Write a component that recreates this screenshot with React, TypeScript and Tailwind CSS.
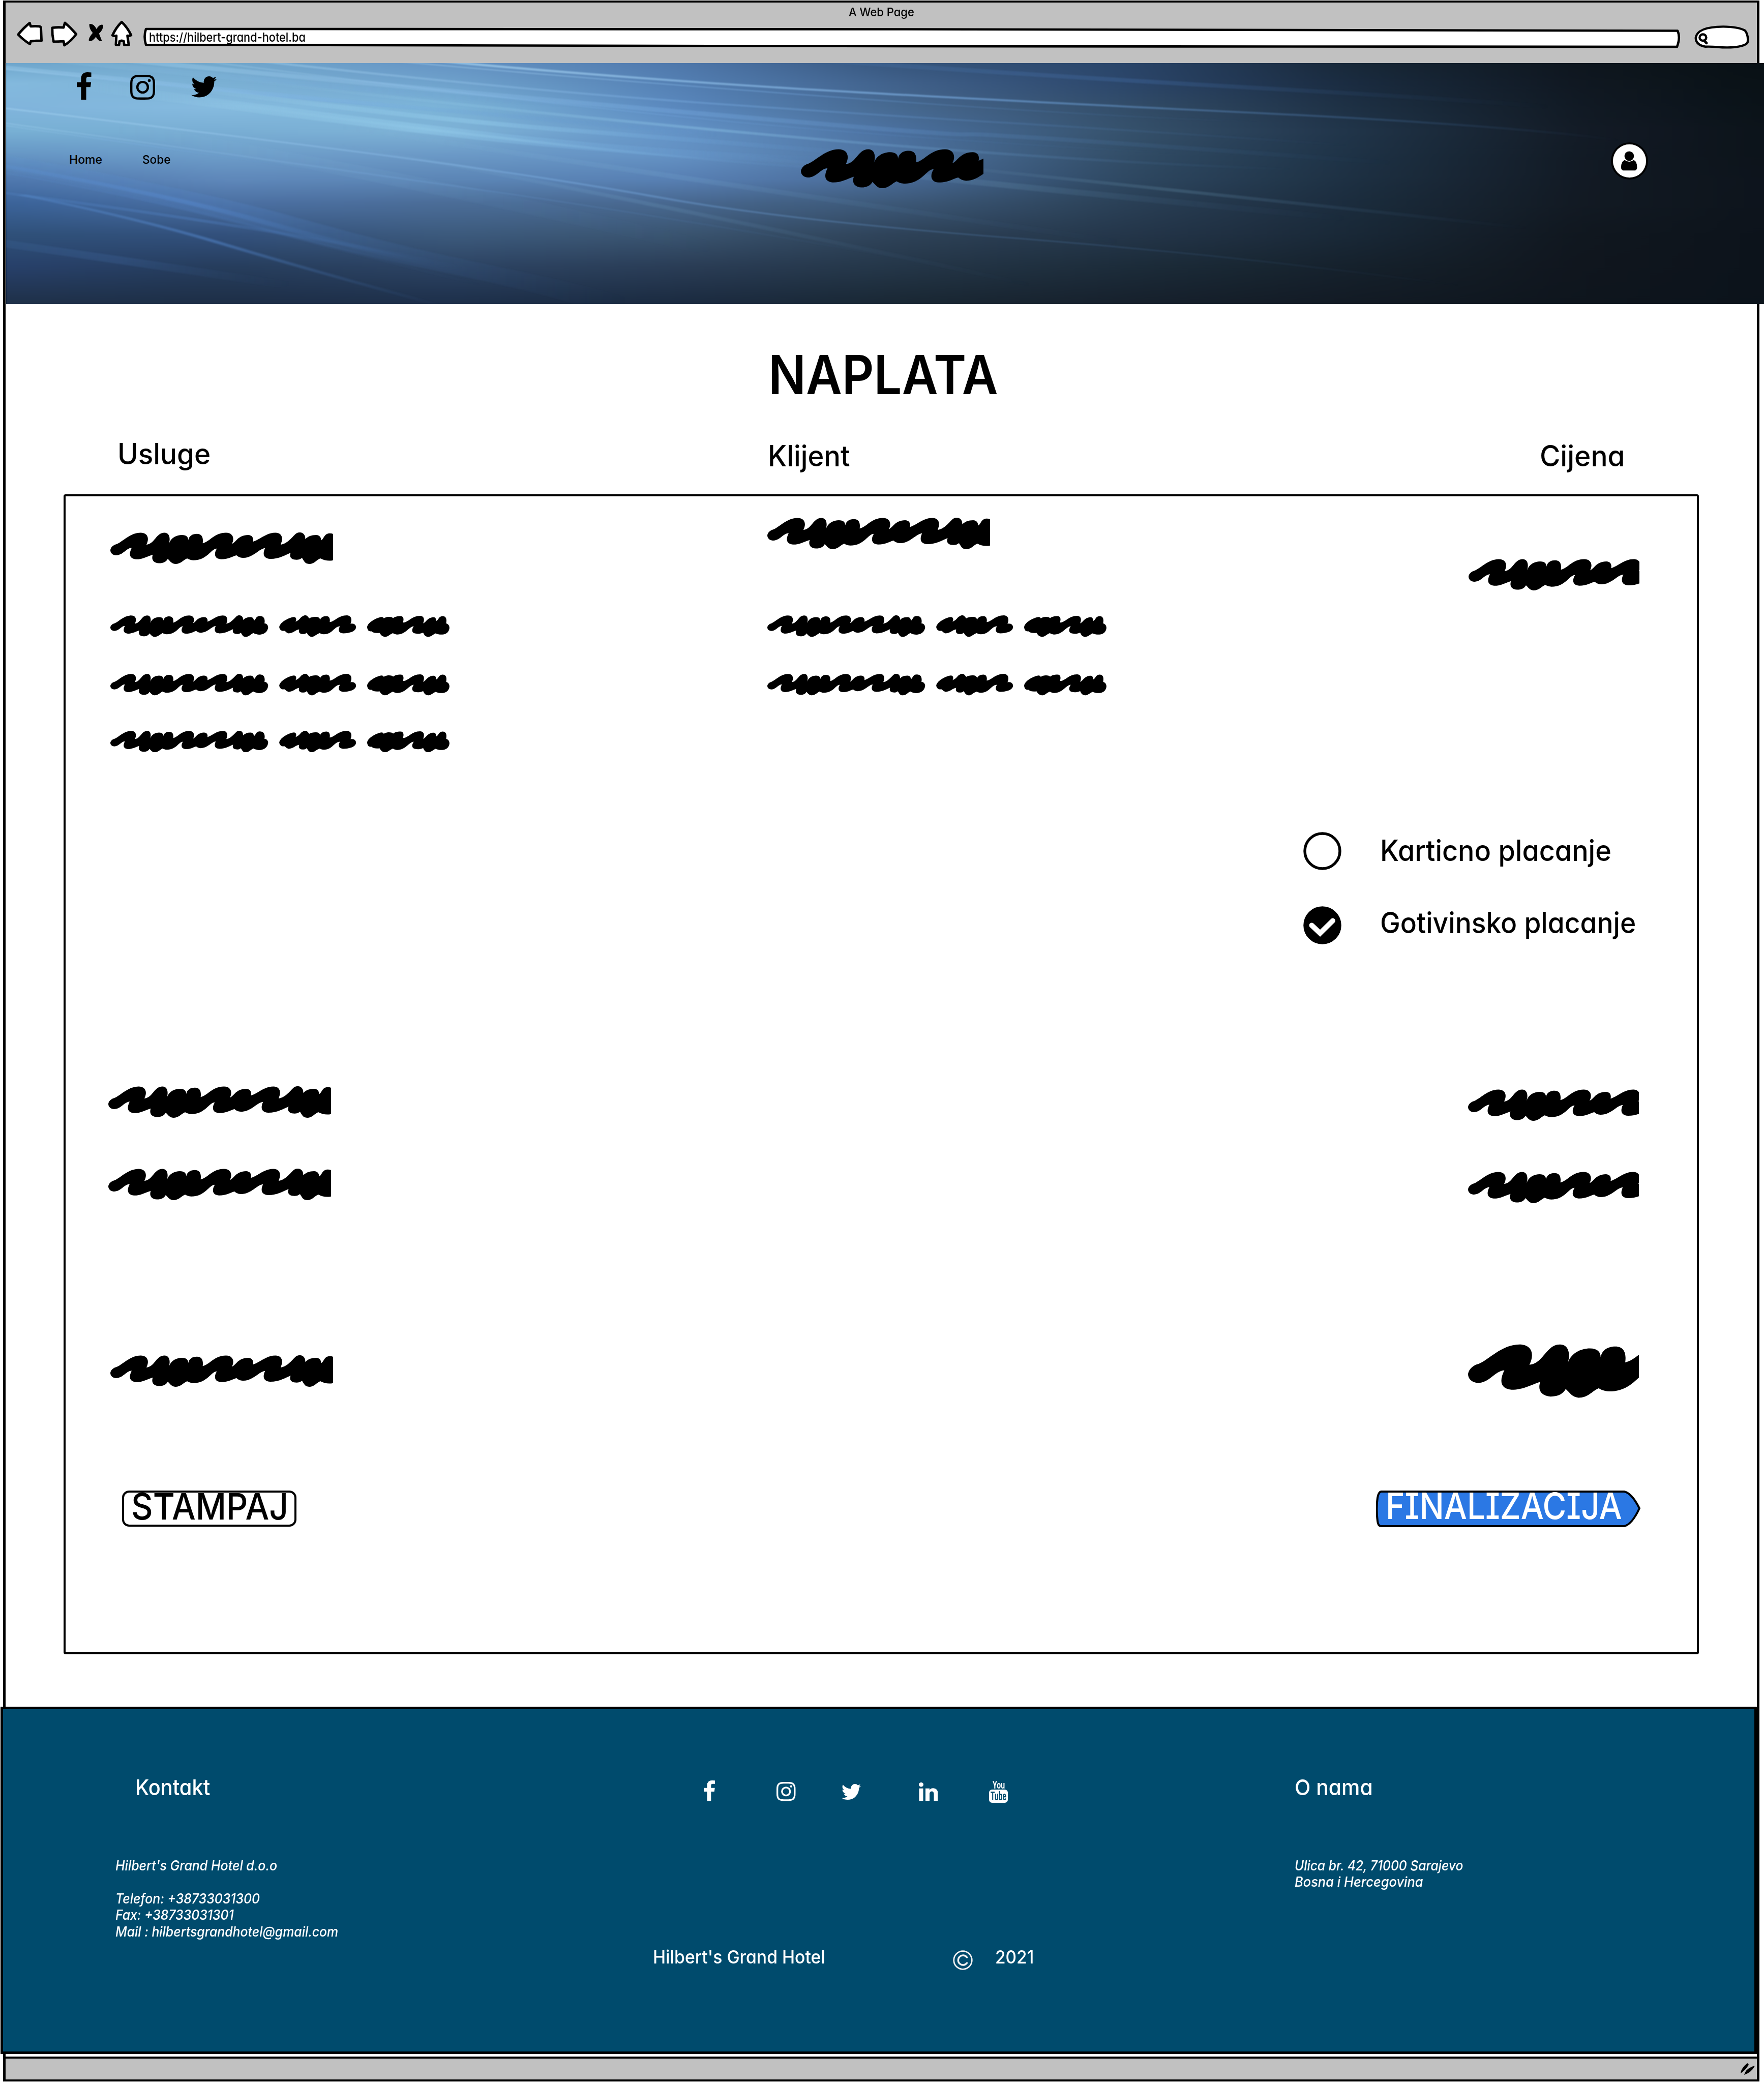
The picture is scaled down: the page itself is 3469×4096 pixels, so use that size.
import { useLayoutEffect, useRef, useState } from "react";
import type { ReactNode } from "react";

/* ---------- text ---------- */

/** One line of text, condensed or stretched horizontally to an exact width. */
function Line({ w, className = "", children }: { w: number; className?: string; children: ReactNode }) {
  const ref = useRef<HTMLSpanElement>(null);
  const [scale, setScale] = useState(1);
  useLayoutEffect(() => {
    if (ref.current) setScale(w / ref.current.offsetWidth);
  }, [w]);
  return (
    <div className={"flex shrink-0 items-center whitespace-nowrap " + className} style={{ width: w }}>
      <span className="origin-left" style={{ transform: `scaleX(${scale})` }}>
        <span ref={ref} className="inline-block">
          {children}
        </span>
      </span>
    </div>
  );
}

/* ---------- scribbles ---------- */

const SCRIBBLE =
  "M0 75C2 62 12 53 22 50C45 39 70 2 109 1C134 1 142 24 130 52C160 49 165 1 195 1C212 1 218 22 211 49C218 22 240 11 258 11C274 11 281 20 281 33C284 14 297 6 312 6C330 6 336 22 333 46C358 40 375 1 417 1C442 1 449 26 438 49C452 44 460 11 497 11C512 12 517 24 514 40C540 30 562 1 595 1C620 1 624 26 614 52C642 48 662 8 672 3C682 -4 704 -1 703 29C712 17 725 11 742 11C755 11 760 22 760 34C772 26 770 4 792 4C812 4 821 22 816 50C832 52 840 70 833 88C825 118 790 132 757 111C742 119 735 135 717 135C702 134 700 126 691 109C682 118 672 118 662 116C648 112 646 100 650 87C628 98 610 113 577 113C552 112 548 92 558 67C535 70 515 109 478 109C466 108 460 103 455 98C440 102 428 115 399 115C374 113 373 90 384 69C362 70 350 119 299 119C288 118 282 115 277 111C262 119 254 135 234 135C220 133 217 124 207 113C202 124 192 132 175 132C155 130 147 116 153 95C136 101 118 115 92 115C68 112 66 92 77 66C56 68 46 98 20 98C6 96 0 86 0 75Z";

const WORD_MID =
  "M792 922C796 898 832 880 845 879C854 880 855 890 851 899C864 894 868 881 875 877C886 868 892 870 900 885C912 877 928 878 934 881C940 886 939 890 938 895C941 881 950 875 962 875C974 876 976 888 974 901C992 899 1005 872 1036 872C1054 874 1055 892 1049 908C1062 904 1070 914 1069 925C1066 942 1045 949 1022 949C1006 947 1003 935 1011 919C990 919 985 953 953 953C946 953 942 950 938 948C925 953 920 964 908 964C898 962 895 953 891 946C887 953 876 953 870 951C862 947 862 940 864 932C850 935 842 949 826 949C816 947 816 940 810 938C802 940 794 936 792 922Z";

const WORD_END =
  "M1109 922C1112 899 1148 881 1160 879C1166 879 1168 882 1169 885C1178 877 1196 876 1203 884C1210 875 1229 874 1234 876C1242 881 1241 892 1238 903C1258 902 1270 874 1300 874C1316 875 1316 892 1311 906C1322 903 1325 880 1350 880C1357 881 1358 890 1357 896C1367 894 1366 875 1381 875C1396 876 1396 890 1394 906C1408 911 1408 930 1402 940C1395 956 1372 958 1356 949C1345 954 1340 964 1328 964C1317 962 1315 955 1311 946C1302 951 1290 952 1284 950C1270 947 1268 935 1277 919C1260 920 1248 955 1216 954C1210 953 1206 951 1202 948C1190 953 1185 964 1173 964C1160 961 1158 954 1154 947C1140 949 1131 947 1124 940C1115 942 1110 935 1109 922Z";

function Scribble({ w, h = 62 }: { w: number; h?: number }) {
  const visible = w / (0.008797 * h);
  return (
    <svg className="block shrink-0" width={w} height={h} viewBox={`0 0 ${visible} 135`} preserveAspectRatio="none">
      <path d={SCRIBBLE} />
    </svg>
  );
}

function ScribbleRow() {
  return (
    <svg className="block shrink-0" width={667.5} height={42.3} viewBox="183 872 1224 92" preserveAspectRatio="none">
      <path d={SCRIBBLE} transform="translate(183 872) scale(.681)" />
      <path d={WORD_MID} />
      <path d={WORD_END} />
    </svg>
  );
}

/* ---------- icons ---------- */

const GLYPHS = {
  facebook: {
    box: "479 0 864 1664",
    d: "M1343 12v264h-157q-86 0-116 36t-30 108v189h293l-39 296h-254v759h-306v-759h-255v-296h255v-218q0-186 104-288.5t277-102.5q147 0 228 12z",
  },
  instagram: {
    box: "128 128 1536 1536",
    d: "M1152 896q0-106-75-181t-181-75-181 75-75 181 75 181 181 75 181-75 75-181zm138 0q0 164-115 279t-279 115-279-115-115-279 115-279 279-115 279 115 115 279zm108-410q0 38-27 65t-65 27-65-27-27-65 27-65 65-27 65 27 27 65zm-502-220q-7 0-76.5-.5t-105.5 0-96.5 3-103 10-71.5 18.5q-50 20-88 58t-58 88q-11 29-18.5 71.5t-10 103-3 96.5 0 105.5.5 76.5-.5 76.5 0 105.5 3 96.5 10 103 18.5 71.5q20 50 58 88t88 58q29 11 71.5 18.5t103 10 96.5 3 105.5 0 76.5-.5 76.5.5 105.5 0 96.5-3 103-10 71.5-18.5q50-20 88-58t58-88q11-29 18.5-71.5t10-103 3-96.5 0-105.5-.5-76.5.5-76.5 0-105.5-3-96.5-10-103-18.5-71.5q-20-50-58-88t-88-58q-29-11-71.5-18.5t-103-10-96.5-3-105.5 0-76.5.5zm768 630q0 229-5 317-10 208-124 322t-322 124q-88 5-317 5t-317-5q-208-10-322-124t-124-322q-5-88-5-317t5-317q10-208 124-322t322-124q88-5 317-5t317 5q208 10 322 124t124 322q5 88 5 317z",
  },
  twitter: {
    box: "108 256 1576 1280",
    d: "M1684 408q-67 98-162 167 1 14 1 42 0 130-38 259.5t-115.5 248.5-184.5 210.5-258 146-323 54.5q-271 0-496-145 35 4 78 4 225 0 401-138-105-2-188-64.5t-114-159.5q33 5 61 5 43 0 85-11-112-23-185.5-111.5t-73.5-205.5v-4q68 38 146 41-66-44-105-115t-39-154q0-88 44-163 121 149 294.5 238.5t371.5 99.5q-8-38-8-74 0-134 94.5-228.5t228.5-94.5q140 0 236 102 109-21 205-78-37 115-142 178 93-10 186-50z",
  },
  linkedin: {
    box: "128 148 1536 1468",
    d: "M477 625v991h-330v-991h330zm21-306q1 73-50.5 122t-135.5 49h-2q-82 0-132-49t-50-122q0-74 51.5-122.5t134.5-48.5 133 48.5 51 122.5zm1166 729v568h-329v-530q0-105-40.5-164.5t-126.5-59.5q-63 0-105.5 34.5t-63.5 85.5q-11 30-11 81v553h-329q2-399 2-647t-1-296l-1-48h329v144h-2q20-32 41-56t56.5-52 87-43.5 114.5-15.5q171 0 275 113.5t104 332.5z",
  },
};

function Glyph({ name, className }: { name: keyof typeof GLYPHS; className: string }) {
  return (
    <svg className={"block shrink-0 " + className} viewBox={GLYPHS[name].box} preserveAspectRatio="none" fill="currentColor">
      <path d={GLYPHS[name].d} />
    </svg>
  );
}

function YouTubeMark() {
  return (
    <div className="flex w-[37px] shrink-0 flex-col items-center font-['Roboto',sans-serif] font-bold">
      <Line w={24} className="h-[18px] text-[21px] leading-none">You</Line>
      <div className="flex h-[26px] w-[37px] items-center justify-center rounded-[6px] bg-white text-[#004b6d]">
        <Line w={31} className="h-[24px] text-[23px] leading-none">Tube</Line>
      </div>
    </div>
  );
}

/* ---------- header artwork ---------- */

// Colour grid of the backdrop: one vertical profile for each x position.
const ROWS = [0, 0.084, 0.183, 0.282, 0.382, 0.481, 0.58, 0.712, 0.845, 1];
const PROFILES: [number, string[]][] = [
  [6, ["#6fa6cc", "#84bade", "#80b4dc", "#78b0d4", "#6595c4", "#4f78ae", "#3b639a", "#2f5079", "#27406a", "#1e3048"]],
  [200, ["#72a8cc", "#7ab0d4", "#86bbdf", "#79aed4", "#6d9dc9", "#5f88ba", "#4b70a3", "#32507c", "#263d5c", "#1d2e46"]],
  [400, ["#6594c4", "#6fa2cc", "#7cb4d8", "#7eb2d6", "#6b99c6", "#5c86b6", "#4b6d98", "#3c5a7d", "#2c4363", "#1d2f4a"]],
  [600, ["#4f78ac", "#5480b4", "#5a88be", "#6494c8", "#6492c4", "#5880b4", "#486890", "#3a5470", "#2a3d56", "#1a2a40"]],
  [800, ["#36557c", "#40608a", "#46688f", "#4a6f9e", "#4d729f", "#486a96", "#3c5878", "#2e4258", "#243648", "#192733"]],
  [1000, ["#2a456a", "#2b466a", "#334d69", "#36516c", "#324d67", "#2e4862", "#2a4056", "#24364a", "#1c2c3a", "#16202c"]],
  [1200, ["#182838", "#1a2b40", "#1d3044", "#203449", "#1e3246", "#1d3042", "#1b2c3d", "#192837", "#15212c", "#121a24"]],
  [1400, ["#0e161e", "#101821", "#111a24", "#131b26", "#121b25", "#121a24", "#121a23", "#10171f", "#10161e", "#0e151d"]],
  [1568, ["#081014", "#091116", "#0a1218", "#0c131a", "#0c131a", "#0d141c", "#0d141c", "#0c131b", "#0c131b", "#0b131b"]],
];

const channel = (hex: string, i: number) => parseInt(hex.slice(1 + 2 * i, 3 + 2 * i), 16);

function colourAt(x: number, row: number) {
  let k = 0;
  while (k < PROFILES.length - 2 && PROFILES[k + 1][0] < x) k++;
  const [x0, a] = PROFILES[k];
  const [x1, b] = PROFILES[k + 1];
  const f = Math.min(1, Math.max(0, (x - x0) / (x1 - x0)));
  const mix = (i: number) => Math.round(channel(a[row], i) * (1 - f) + channel(b[row], i) * f);
  return `rgb(${mix(0)},${mix(1)},${mix(2)})`;
}

// Columns overrun both edges so that the blur has something to draw on.
const COLUMN_W = 20;
const COLUMNS = Array.from({ length: 86 }, (_, i) => -74 + i * COLUMN_W);

type Ray = [d: string, width: number, opacity: number, tone: "edge" | "inner" | "deep"];

const RAYS: Ray[] = [
  ["M-20 35Q110 125 200 190T420 335T640 480", 22, 0.32, "edge"],
  ["M-20 42Q110 135 200 200T420 345", 5, 0.3, "edge"],
  ["M60 150Q280 360 430 480T760 640", 44, 0.42, "inner"],
  ["M120 130Q340 350 500 440T800 610", 24, 0.4, "inner"],
  ["M180 260Q330 400 480 520T800 720", 12, 0.3, "inner"],
  ["M390 10Q550 115 700 180T1100 330T1440 510", 12, 0.62, "edge"],
  ["M350 10Q500 110 750 240T1120 390", 7, 0.4, "edge"],
  ["M230 10Q450 185 620 270T900 400T1200 540", 11, 0.36, "edge"],
  ["M120 10Q420 215 640 350T860 470T1240 650", 24, 0.32, "edge"],
  ["M180 10Q470 270 650 390T1050 590", 7, 0.28, "edge"],
  ["M200 120Q540 390 760 520T1150 690", 14, 0.34, "inner"],
  ["M60 10Q200 110 330 190T560 300", 30, 0.12, "edge"],
  ["M-20 285Q200 470 340 600T590 870T900 1120T1300 1420", 8, 0.42, "edge"],
  ["M-20 375Q200 590 400 790T820 1270", 6, 0.28, "edge"],
  ["M-20 390Q180 590 330 740", 4, 0.3, "edge"],
  ["M-20 615Q150 830 240 1010T420 1320T560 1570", 60, 0.18, "deep"],
  ["M-20 640Q140 830 230 1010T410 1330", 14, 0.32, "deep"],
  ["M-20 680Q120 850 210 1020T430 1420", 8, 0.18, "deep"],
  ["M-20 815Q130 950 250 1090T420 1330", 12, 0.26, "deep"],
  ["M20 850Q120 990 200 1160T400 1560", 8, 0.45, "deep"],
  ["M-20 1130Q100 1250 260 1420", 34, 0.14, "deep"],
  ["M720 0Q930 105 1120 180T1380 300", 24, 0.18, "deep"],
  ["M800 640Q1060 830 1360 1060", 16, 0.16, "inner"],
  ["M640 600Q900 800 1200 1000", 30, 0.12, "inner"],
  ["M300 420Q650 790 1000 1150", 22, 0.11, "inner"],
  ["M300 530Q560 860 920 1420", 14, 0.12, "inner"],
  ["M100 420Q400 790 640 1200", 50, 0.07, "inner"],
];

function Backdrop() {
  return (
    <svg className="absolute inset-0 h-full w-full overflow-hidden" viewBox="6 23 1562 1512" preserveAspectRatio="none">
      <defs>
        {COLUMNS.map((x, c) => (
          <linearGradient key={c} id={`col${c}`} x1="0" y1="0" x2="0" y2="1">
            {ROWS.map((offset, r) => (
              <stop key={r} offset={offset} stopColor={colourAt(x + COLUMN_W / 2, r)} />
            ))}
          </linearGradient>
        ))}
        <linearGradient id="edge">
          <stop offset="0" stopColor="#b0dcf6" />
          <stop offset="0.45" stopColor="#7db2ea" stopOpacity="0.9" />
          <stop offset="1" stopColor="#4a7fc0" stopOpacity="0" />
        </linearGradient>
        <linearGradient id="inner">
          <stop offset="0" stopColor="#a8dcf2" stopOpacity="0" />
          <stop offset="0.45" stopColor="#98d2f0" />
          <stop offset="1" stopColor="#5a92d8" stopOpacity="0" />
        </linearGradient>
        <linearGradient id="deep">
          <stop offset="0" stopColor="#5f96da" stopOpacity="0.6" />
          <stop offset="0.45" stopColor="#5c94e0" />
          <stop offset="1" stopColor="#3f6ba8" stopOpacity="0" />
        </linearGradient>
        <filter id="blend" filterUnits="userSpaceOnUse" x="-60" y="23" width="1700" height="1512" colorInterpolationFilters="sRGB">
          <feGaussianBlur stdDeviation="18 0" />
        </filter>
        <filter id="soft" filterUnits="userSpaceOnUse" x="-20" y="0" width="1620" height="1560" colorInterpolationFilters="sRGB">
          <feGaussianBlur stdDeviation="2 4" />
        </filter>
      </defs>
      <g filter="url(#blend)">
        {COLUMNS.map((x, c) => (
          <rect key={c} x={x} y={23} width={COLUMN_W} height={1512} fill={`url(#col${c})`} shapeRendering="crispEdges" />
        ))}
      </g>
      <g filter="url(#soft)" fill="none">
        {RAYS.map(([d, width, opacity, tone], i) => (
          <path key={i} d={d} strokeWidth={width} opacity={opacity} stroke={`url(#${tone})`} />
        ))}
      </g>
    </svg>
  );
}

/* ---------- browser chrome ---------- */

function BrowserBar() {
  return (
    <div className="flex h-[119px] shrink-0 flex-col bg-[#c1c1c1]">
      <div className="flex h-[34px] items-end pl-[1658px]">
        <Line w={129} className="h-[30px] text-[23px]">A Web Page</Line>
      </div>
      <div className="flex h-[60px] items-start">
        <svg className="ml-[20px] block h-[54.7px] w-[232.5px] shrink-0" viewBox="60 100 450 140" preserveAspectRatio="none">
          <g fill="#fff" stroke="#000" strokeWidth="4.8" strokeLinejoin="round">
            <path vectorEffect="non-scaling-stroke" d="M69 174Q90 140 113 116L117 133Q135 131 150 133Q156 134 156 145L158 205Q138 205 117 208L114 222Q92 205 69 174Z" />
            <path vectorEffect="non-scaling-stroke" d="M199 140Q220 136 242 139L247 115Q268 138 290 172Q270 208 245 228L242 208Q222 210 204 210Q198 175 199 140Z" />
            <path vectorEffect="non-scaling-stroke" d="M463 111Q485 138 499 177Q492 182 485 180L490 226L473 227L471 208Q463 202 455 208L453 227L441 226L443 180Q435 183 428 178Q442 138 463 111Z" />
          </g>
          <path d="M340 121Q356 116 367 146Q380 118 393 126Q393 150 377 169L388 206Q376 212 365 186Q350 214 338 204Q337 190 353 166Q338 142 340 121Z" />
        </svg>
        <div className="relative ml-[18px] mt-[15px] h-[41px] w-[3023px] shrink-0">
          <svg className="absolute inset-0 h-full w-full" viewBox="0 0 3023 41" preserveAspectRatio="none">
            <path d="M5 3L1500 3.500L3017 6.500Q3023 19 3016 38L1500 37L5 34Q0 18 5 3Z" fill="#fff" stroke="#000" strokeWidth="4.600" strokeLinejoin="round" />
          </svg>
          <Line w={308} className="relative ml-[11px] h-[39px] text-[24.500px]">https://hilbert-grand-hotel.ba</Line>
        </div>
        <svg className="ml-[27px] mt-[11px] block h-[46px] w-[108px] shrink-0" viewBox="1316 129 198 118" preserveAspectRatio="none">
          <path vectorEffect="non-scaling-stroke" fill="#fff" stroke="#000" strokeWidth="4.400" d="M1356 236Q1322 228 1321 192Q1326 136 1420 135Q1475 136 1499 155Q1512 180 1508 215Q1502 232 1460 239Q1430 242 1400 238Q1375 235 1356 236Z" />
          <ellipse vectorEffect="non-scaling-stroke" cx="1347" cy="190" rx="12" ry="16" fill="none" stroke="#000" strokeWidth="4.400" />
          <path vectorEffect="non-scaling-stroke" d="M1352 206L1360 218" stroke="#000" strokeWidth="5" strokeLinecap="round" />
        </svg>
      </div>
    </div>
  );
}

function Hero() {
  return (
    <header className="relative z-10 ml-px h-[474px] w-[3457px] shrink-0">
      <Backdrop />
      <div className="relative flex flex-col">
        <div className="flex h-[90px] items-start pl-[139px] pt-[18px]">
          <Glyph name="facebook" className="h-[54px] w-[28.500px]" />
          <Glyph name="instagram" className="ml-[76px] mt-[5px] h-[49px] w-[49px]" />
          <Glyph name="twitter" className="ml-[71px] mt-[8px] h-[41.500px] w-[50.500px]" />
        </div>
        <div className="flex h-[200px] items-start">
          <div className="flex pl-[124px] pt-[80px]">
            <Line w={65} className="h-[40px] text-[23px]">Home</Line>
            <Line w={55} className="ml-[79px] h-[40px] text-[23px]">Sobe</Line>
          </div>
          <div className="ml-[1240px] mt-[79px]">
            <Scribble w={358.7} h={77.3} />
          </div>
          <svg className="ml-[1234px] mt-[66px] block h-[73px] w-[73px] shrink-0" viewBox="1019 719 132 185" preserveAspectRatio="none">
            <ellipse cx="1085" cy="811.500" rx="66" ry="92.500" />
            <ellipse cx="1085" cy="811.500" rx="59" ry="83" fill="#fff" />
            <ellipse cx="1084" cy="787" rx="17" ry="23.500" />
            <path d="M1068 807Q1084 823 1100 807Q1112 812 1112 845Q1110 859 1104 859H1063Q1056 857 1055 845Q1055 812 1068 807Z" />
          </svg>
        </div>
      </div>
    </header>
  );
}

/* ---------- page body ---------- */

function Radio({ checked = false }: { checked?: boolean }) {
  return (
    <svg className="mb-[3px] block h-[75px] w-[75px] shrink-0" viewBox="0 0 75 75">
      <circle cx="37.500" cy="37.500" r="34.500" fill={checked ? "#000" : "#fff"} stroke="#000" strokeWidth="5.500" />
      {checked && <path d="M16.500 37.500L33 53L58 28.500" fill="none" stroke="#fff" strokeWidth="10" strokeLinecap="round" strokeLinejoin="miter" />}
    </svg>
  );
}

function Invoice() {
  return (
    <section className="ml-[113.500px] flex h-[2281px] w-[3216px] shrink-0 flex-col rounded-[4px] border-[4.500px] border-black">
      <div className="flex h-[661px] shrink-0 items-start">
        <div className="flex w-[1380px] shrink-0 flex-col pl-[88px] pt-[71px]">
          <Scribble w={438.5} />
          <div className="flex flex-col pt-[101px]">
            <ScribbleRow />
            <div className="pt-[73px]"><ScribbleRow /></div>
            <div className="pt-[69px]"><ScribbleRow /></div>
          </div>
        </div>
        <div className="flex w-[1379px] shrink-0 flex-col pt-[42px]">
          <Scribble w={438.5} />
          <div className="flex flex-col gap-[73px] pt-[130px]">
            <ScribbleRow />
            <ScribbleRow />
          </div>
        </div>
        <div className="pt-[123px]">
          <Scribble w={336} />
        </div>
      </div>

      <div className="flex shrink-0 flex-col gap-[71px] pl-[2434px]">
        <div className="flex h-[75px] items-center">
          <Radio />
          <Line w={455} className="mb-[4px] ml-[76px] h-[70px] text-[57px]">Karticno placanje</Line>
        </div>
        <div className="flex h-[75px] items-center">
          <Radio checked />
          <Line w={503} className="mb-[12px] ml-[76px] h-[63px] text-[57px]">Gotivinsko placanje</Line>
        </div>
      </div>

      <div className="mt-[278px] flex h-[162px] shrink-0 items-start justify-between pl-[84px] pr-[114px]">
        <Scribble w={438.5} />
        <div className="mt-[6px]"><Scribble w={335.5} /></div>
      </div>
      <div className="flex h-[345px] shrink-0 items-start justify-between pl-[84px] pr-[114px]">
        <Scribble w={438.5} />
        <div className="mt-[6px]"><Scribble w={335.5} /></div>
      </div>
      <div className="flex h-[106px] shrink-0 items-center justify-between pl-[88px] pr-[114px]">
        <Scribble w={438.5} />
        <Scribble w={335.5} h={105.5} />
      </div>

      <div className="mt-[182px] flex shrink-0 justify-between pl-[111px] pr-[111px]">
        <button className="flex h-[71px] w-[343px] items-start rounded-[14px] border-[4px] border-black bg-white pl-[14px]">
          <Line w={309} className="h-[54px] text-[72px]">STAMPAJ</Line>
        </button>
        <button className="relative flex h-[72px] w-[520px] items-start">
          <svg className="absolute inset-0 h-full w-full" viewBox="0 0 520 72">
            <path d="M10 2H488Q503 5 518 35Q503 67 488 70H10Q4 70 3 60Q0 36 3 14Q5 3 10 2Z" fill="#2b78e4" stroke="#000" strokeWidth="4" strokeLinejoin="round" />
          </svg>
          <Line w={465} className="relative ml-[19px] h-[60px] text-[72px] text-white">FINALIZACIJA</Line>
        </button>
      </div>
    </section>
  );
}

function Footer() {
  return (
    <footer className="relative z-10 -ml-[10px] flex h-[683px] w-[3454px] shrink-0 items-start border-[5px] border-black bg-[#004b6d] pt-[128px] text-white">
      <div className="flex w-[1280px] shrink-0 flex-col pl-[221px]">
        <Line w={147} className="ml-[39px] h-[50px] text-[43px]">Kontakt</Line>
        <div className="flex flex-col pt-[114px] text-[27px] leading-[32.400px] italic">
          <Line w={318} className="h-[32.400px]">Hilbert's Grand Hotel d.o.o</Line>
          <Line w={284} className="mt-[32.400px] h-[32.400px]">Telefon: +38733031300</Line>
          <Line w={233} className="h-[32.400px]">Fax: +38733031301</Line>
          <Line w={438} className="h-[32.400px]">Mail : hilbertsgrandhotel@gmail.com</Line>
        </div>
      </div>
      <div className="flex w-[1260px] shrink-0 flex-col pt-[12px]">
        <div className="flex h-[44px] items-center pl-[98px]">
          <Glyph name="facebook" className="mb-[3px] h-[40.500px] w-[22px]" />
          <Glyph name="instagram" className="ml-[121px] h-[37.500px] w-[37.500px]" />
          <Glyph name="twitter" className="ml-[90px] h-[31px] w-[38px]" />
          <Glyph name="linkedin" className="ml-[114px] h-[36px] w-[37.500px]" />
          <div className="ml-[101px]"><YouTubeMark /></div>
        </div>
        <div className="flex items-center pt-[278px]">
          <Line w={339} className="-ml-[2px] h-[50px] text-[35.500px]">Hilbert's Grand Hotel</Line>
          <svg className="ml-[251px] mt-[12px] block h-[39px] w-[39px]" viewBox="0 0 39 39" fill="none" stroke="#f2f2f2" strokeWidth="2.800">
            <circle cx="19.500" cy="19.500" r="17.800" />
            <path d="M27.500 14A9.500 9.500 0 1 0 27.500 25" strokeWidth="3.400" strokeLinecap="round" />
          </svg>
          <Line w={76} className="ml-[44px] h-[50px] text-[35.500px]">2021</Line>
        </div>
      </div>
      <div className="flex flex-col">
        <Line w={154} className="h-[50px] text-[43px]">O nama</Line>
        <div className="flex flex-col pt-[114px] text-[27px] leading-[32.400px] italic">
          <Line w={331} className="h-[32.400px]">Ulica br. 42, 71000 Sarajevo</Line>
          <Line w={253} className="h-[32.400px]">Bosna i Hercegovina</Line>
        </div>
      </div>
    </footer>
  );
}

export default function App() {
  return (
    <div className="h-[4096px] w-[3469px] overflow-hidden bg-white pl-[6px] pt-px font-['Inter',sans-serif] font-medium text-black [font-feature-settings:'cv11','cv08']">
      <div className="flex h-[4092px] w-[3454px] flex-col border-x-[5px] border-y-4 border-black">
        <BrowserBar />
        <Hero />
        <main className="flex h-[2758px] shrink-0 flex-col">
          <Line w={452} className="ml-[1500px] mt-[78px] h-[120px] text-[106px] font-semibold">NAPLATA</Line>
          <div className="flex h-[176px] shrink-0 items-start">
            <Line w={183} className="ml-[220px] mt-[62px] h-[70px] text-[57px]">Usluge</Line>
            <Line w={161} className="ml-[1096px] mt-[66px] h-[70px] text-[57px]">Klijent</Line>
            <Line w={168} className="ml-[1357px] mt-[66px] h-[70px] text-[57px]">Cijena</Line>
          </div>
          <Invoice />
        </main>
        <Footer />
        <div className="mt-[5px] flex grow items-center justify-end border-t-4 border-black bg-[#c1c1c1] pr-[3px]">
          <svg className="block h-[24px] w-[29px]" viewBox="0 0 29 24">
            <path d="M0 20Q1 10 13 0Q18 2 14 6Q9 14 0 20ZM7 23Q10 10 28 5Q22 18 7 23Z" />
          </svg>
        </div>
      </div>
    </div>
  );
}
